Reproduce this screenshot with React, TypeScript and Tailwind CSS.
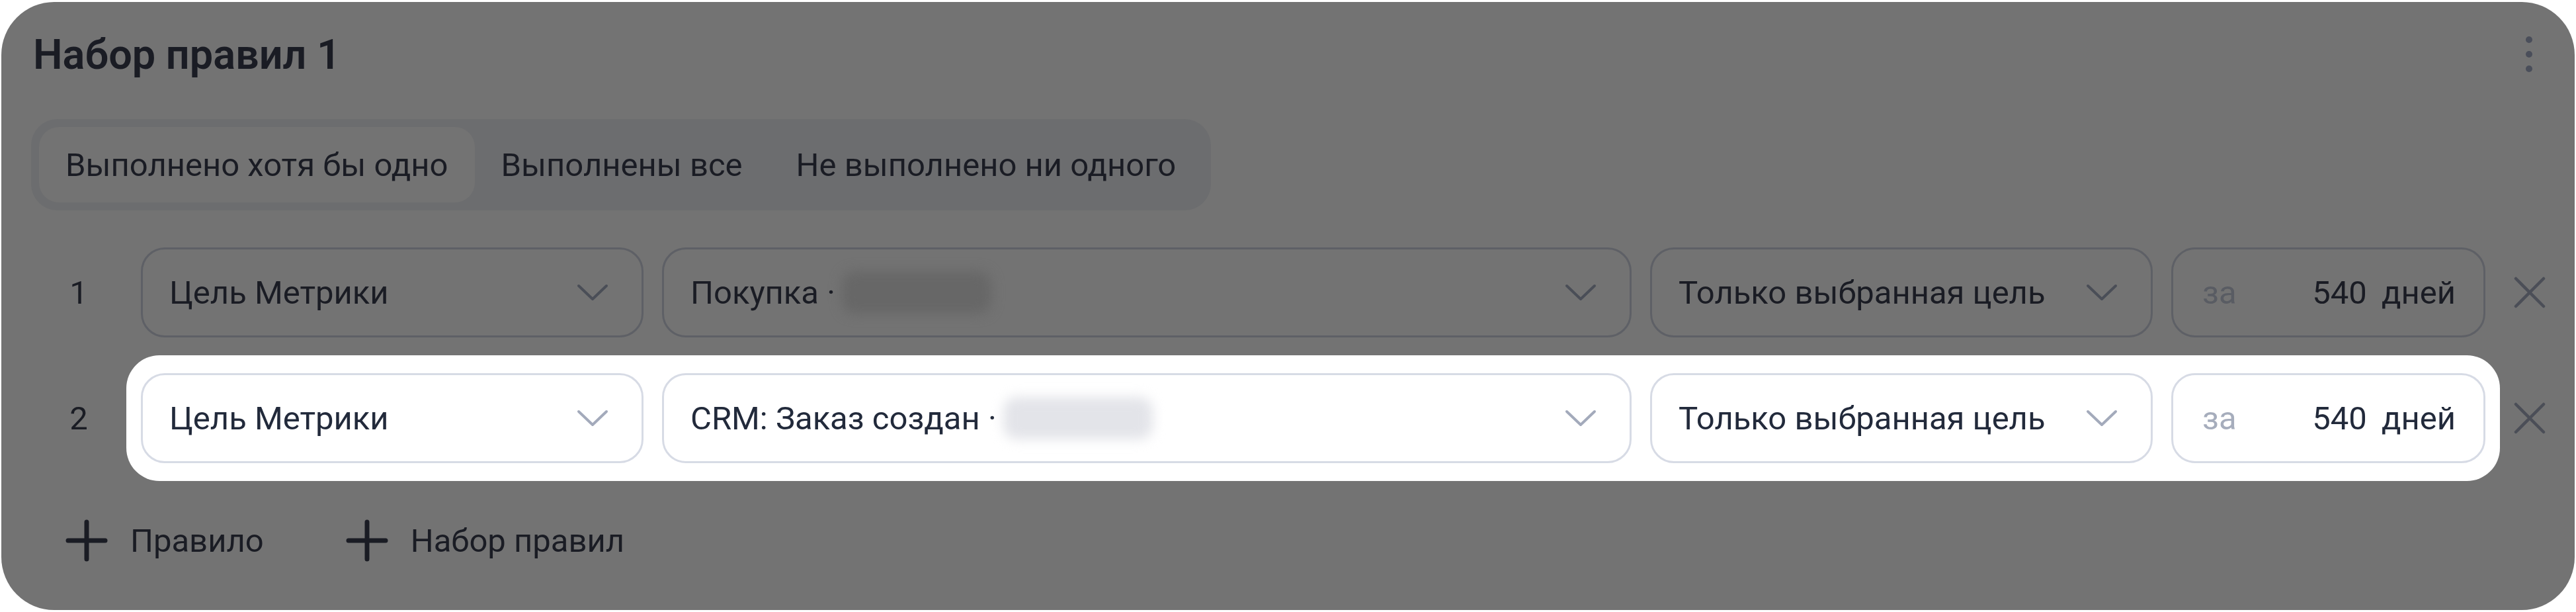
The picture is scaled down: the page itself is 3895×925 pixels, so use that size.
import clsx from "clsx";

type Tone = "dim" | "lit";

const Chevron = ({ tone }: { tone: Tone }) => (
  <svg
    width="48"
    height="28"
    viewBox="0 0 48 28"
    fill="none"
    className={tone === "dim" ? "text-[#4a4e57]" : "text-[#a3aabb]"}
  >
    <path d="M3 4L24 24L45 4" stroke="currentColor" strokeWidth="4" strokeLinecap="round" strokeLinejoin="round" />
  </svg>
);

const Cross = () => (
  <svg width="50" height="50" viewBox="0 0 50 50" fill="none" className="text-[#4b4e57]">
    <path d="M4 4L46 46M46 4L4 46" stroke="currentColor" strokeWidth="4.5" strokeLinecap="round" />
  </svg>
);

const Plus = () => (
  <svg width="64" height="64" viewBox="0 0 64 64" fill="none" className="text-[#1a1c24]">
    <path d="M32 4V60M4 32H60" stroke="currentColor" strokeWidth="7" strokeLinecap="round" />
  </svg>
);

const Box = ({
  tone,
  className,
  children,
}: {
  tone: Tone;
  className: string;
  children: React.ReactNode;
}) => (
  <div
    className={clsx(
      "flex h-[136px] items-center rounded-[36px] border-[3px] pl-[40px] pr-[50px]",
      tone === "dim" ? "border-[#5e6066] bg-[#737373] text-[#1a1c24]" : "border-[#d7dbe5] bg-white text-[#222a3b]",
      className
    )}
  >
    {children}
  </div>
);

const Select = ({ tone, width, children }: { tone: Tone; width: string; children: React.ReactNode }) => (
  <Box tone={tone} className={width}>
    <div className="flex flex-1 items-center">{children}</div>
    <Chevron tone={tone} />
  </Box>
);

const Row = ({ n, tone, goal }: { n: number; tone: Tone; goal: string }) => (
  <div className="flex items-center">
    <div className="w-[144px] text-center text-[#1a1c24]">{n}</div>
    <div
      className={clsx(
        "flex gap-[28px] rounded-[50px] px-[22px] py-[27px]",
        tone === "lit" && "bg-white"
      )}
    >
      <Select tone={tone} width="w-[760px]">
        Цель Метрики
      </Select>
      <Select tone={tone} width="w-[1466px]">
        <span>{goal} ·</span>
        {/* blurred goal id */}
        <span
          className={clsx(
            "ml-[10px] h-[64px] w-[226px] rounded-[20px] blur-[9px]",
            tone === "dim" ? "bg-[#676767]" : "bg-[#e3e4e9]"
          )}
        />
      </Select>
      <Select tone={tone} width="w-[760px]">
        Только выбранная цель
      </Select>
      <Box tone={tone} className="w-[475px] !pl-[44px] !pr-[42px]">
        <span className={tone === "dim" ? "text-[#595c63]" : "text-[#a6adbc]"}>за</span>
        <span className="ml-auto">540</span>
        <span className="ml-[22px]">дней</span>
      </Box>
    </div>
    <div className="ml-[20px]">
      <Cross />
    </div>
  </div>
);

export default function App() {
  return (
    <div className="h-[925px] w-[3895px] bg-white px-[2px] pt-[3px] font-['Roboto',sans-serif] text-[49px] leading-none">
      <div className="h-[919px] rounded-[80px] bg-[#737373] pl-[45px] pt-[46px]">
        {/* header */}
        <div className="flex h-[66px] items-center justify-between pr-[64px]">
          <h1 className="pl-[3px] text-[63px] font-semibold text-[#1a1c24]">Набор правил 1</h1>
          <div className="flex flex-col gap-[12px]">
            <span className="h-[10px] w-[10px] rounded-full bg-[#4a4e5a]" />
            <span className="h-[10px] w-[10px] rounded-full bg-[#4a4e5a]" />
            <span className="h-[10px] w-[10px] rounded-full bg-[#4a4e5a]" />
          </div>
        </div>

        {/* mode switch */}
        <div className="mt-[65px] flex h-[138px] w-fit rounded-[40px] bg-[#6c6d6f] p-[12px] text-[#1a1c24]">
          <div className="flex items-center rounded-[30px] bg-[#737373] px-[40px]">Выполнено хотя бы одно</div>
          <div className="flex items-center px-[40px]">Выполнены все</div>
          <div className="flex items-center px-[41px]">Не выполнено ни одного</div>
        </div>

        {/* rules */}
        <div className="mt-[29px] flex flex-col">
          <Row n={1} tone="dim" goal="Покупка" />
          <Row n={2} tone="lit" goal="CRM: Заказ создан" />
        </div>

        {/* actions */}
        <div className="mt-[58px] flex items-center text-[#1a1c24]">
          <div className="flex items-center gap-[34px] pl-[52px]">
            <Plus />
            <span>Правило</span>
          </div>
          <div className="ml-[124px] flex items-center gap-[34px]">
            <Plus />
            <span>Набор правил</span>
          </div>
        </div>
      </div>
    </div>
  );
}
